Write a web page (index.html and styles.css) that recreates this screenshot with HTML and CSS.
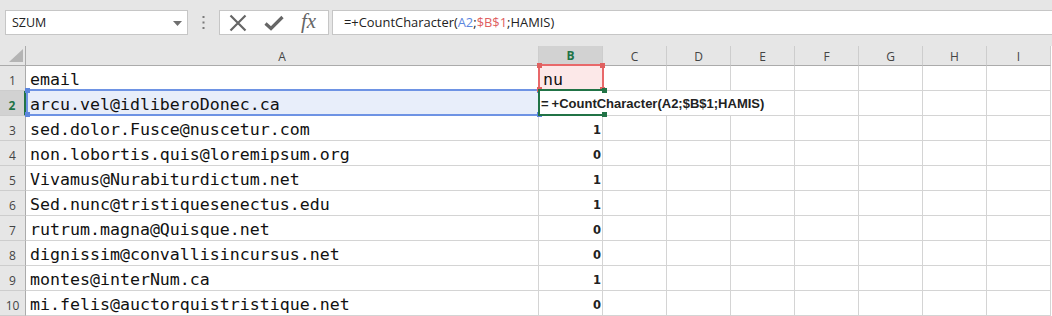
FILE: index.html
```html
<!DOCTYPE html>
<html>
<head>
<meta charset="utf-8">
<link rel="stylesheet" href="styles.css">
</head>
<body>
<div class="toolbar">
  <div class="namebox">
    <span class="namebox-text">SZUM</span>
    <svg class="namebox-arrow" width="9" height="5" viewBox="0 0 9 5"><path d="M0 0 H9 L4.5 5 Z" fill="#6f6f6f"/></svg>
  </div>
  <div class="dots">
    <svg width="3" height="14" viewBox="0 0 3 14"><rect x="0.5" y="0" width="2" height="2" fill="#7a7a7a"/><rect x="0.5" y="5.5" width="2" height="2" fill="#7a7a7a"/><rect x="0.5" y="11" width="2" height="2" fill="#7a7a7a"/></svg>
  </div>
  <div class="fbuttons">
    <svg class="ico-x" width="18" height="18" viewBox="0 0 18 18"><path d="M1.5 1.5 L16.5 16.5 M16.5 1.5 L1.5 16.5" stroke="#666" stroke-width="2.2" fill="none"/></svg>
    <svg class="ico-check" width="20" height="16" viewBox="0 0 20 16"><path d="M1.5 8.5 L7 13.5 L18.5 2" stroke="#666" stroke-width="3.2" fill="none"/></svg>
    <span class="fx">fx</span>
  </div>
  <div class="finput">=+CountCharacter(<span class="c-blue">A2</span>;<span class="c-red">$B$1</span>;HAMIS)</div>
</div>

<div class="sheet">
  <div class="hd corner"><svg width="14" height="13" viewBox="0 0 14 13"><path d="M14 0 V13 H0 Z" fill="#b4b4b4"/></svg></div>
  <div class="hd">A</div>
  <div class="hd hd-sel">B</div>
  <div class="hd">C</div>
  <div class="hd">D</div>
  <div class="hd">E</div>
  <div class="hd">F</div>
  <div class="hd">G</div>
  <div class="hd">H</div>
  <div class="hd">I</div>

  <div class="rh">1</div><div class="c txt">email</div><div class="c txt b1">nu</div><div class="c"></div><div class="c"></div><div class="c"></div><div class="c"></div><div class="c"></div><div class="c"></div><div class="c"></div>
  <div class="rh rh-sel">2</div><div class="c txt a2">arcu.vel@idliberoDonec.ca</div><div class="c"></div><div class="c"></div><div class="c"></div><div class="c"></div><div class="c"></div><div class="c"></div><div class="c"></div><div class="c"></div>
  <div class="rh">3</div><div class="c txt">sed.dolor.Fusce@nuscetur.com</div><div class="c num">1</div><div class="c"></div><div class="c"></div><div class="c"></div><div class="c"></div><div class="c"></div><div class="c"></div><div class="c"></div>
  <div class="rh">4</div><div class="c txt">non.lobortis.quis@loremipsum.org</div><div class="c num">0</div><div class="c"></div><div class="c"></div><div class="c"></div><div class="c"></div><div class="c"></div><div class="c"></div><div class="c"></div>
  <div class="rh">5</div><div class="c txt">Vivamus@Nurabiturdictum.net</div><div class="c num">1</div><div class="c"></div><div class="c"></div><div class="c"></div><div class="c"></div><div class="c"></div><div class="c"></div><div class="c"></div>
  <div class="rh">6</div><div class="c txt">Sed.nunc@tristiquesenectus.edu</div><div class="c num">1</div><div class="c"></div><div class="c"></div><div class="c"></div><div class="c"></div><div class="c"></div><div class="c"></div><div class="c"></div>
  <div class="rh">7</div><div class="c txt">rutrum.magna@Quisque.net</div><div class="c num">0</div><div class="c"></div><div class="c"></div><div class="c"></div><div class="c"></div><div class="c"></div><div class="c"></div><div class="c"></div>
  <div class="rh">8</div><div class="c txt">dignissim@convallisincursus.net</div><div class="c num">0</div><div class="c"></div><div class="c"></div><div class="c"></div><div class="c"></div><div class="c"></div><div class="c"></div><div class="c"></div>
  <div class="rh">9</div><div class="c txt">montes@interNum.ca</div><div class="c num">1</div><div class="c"></div><div class="c"></div><div class="c"></div><div class="c"></div><div class="c"></div><div class="c"></div><div class="c"></div>
  <div class="rh">10</div><div class="c txt">mi.felis@auctorquistristique.net</div><div class="c num">0</div><div class="c"></div><div class="c"></div><div class="c"></div><div class="c"></div><div class="c"></div><div class="c"></div><div class="c"></div>

  <div class="ref-blue"><i class="h h-tl"></i><i class="h h-tr"></i><i class="h h-bl"></i><i class="h h-br"></i></div>
  <div class="ref-red"><i class="h h-tl"></i><i class="h h-tr"></i><i class="h h-bl"></i><i class="h h-br"></i></div>
  <div class="editor"><span class="eq">=</span>+CountCharacter(A2;$B$1;HAMIS)</div>
  <div class="active"><i class="h h-tr"></i><i class="h h-br"></i></div>
</div>
</body>
</html>
```

FILE: styles.css
```css
* { box-sizing: border-box; }
html, body { margin: 0; padding: 0; }
body {
  width: 1052px;
  height: 316px;
  overflow: hidden;
  background: #e6e6e6;
  font-family: "Open Sans", "Liberation Sans", sans-serif;
}

.toolbar {
  height: 46px;
  padding-top: 10px;
  display: flex;
  align-items: flex-start;
}
.namebox {
  margin-left: 5px;
  width: 183px;
  height: 25px;
  background: #fff;
  border: 1px solid #c6c6c6;
  display: flex;
  align-items: center;
  justify-content: space-between;
  padding: 0 5px 0 6px;
}
.namebox-text { font-size: 12.5px; color: #222; }
.namebox-arrow { margin-top: 1px; }
.dots {
  width: 31px;
  height: 25px;
  display: flex;
  align-items: center;
  justify-content: center;
}
.fbuttons {
  width: 110px;
  height: 25px;
  background: #fff;
  border: 1px solid #c6c6c6;
  display: flex;
  align-items: center;
  padding-left: 9px;
}
.ico-x { margin-right: 17px; }
.ico-check { margin-right: 17px; }
.fx {
  font-family: "Liberation Serif", "DejaVu Serif", serif;
  font-style: italic;
  font-size: 21px;
  color: #666;
  line-height: 1;
  margin-top: -3px;
}
.finput {
  margin-left: 3px;
  flex: 1;
  height: 25px;
  background: #fff;
  border: 1px solid #c6c6c6;
  border-right: none;
  padding-left: 11px;
  font-size: 12.9px;
  line-height: 23px;
  color: #222;
}
.c-blue { color: #5c86de; }
.c-red { color: #e0605f; }

.sheet {
  position: relative;
  display: grid;
  grid-template-columns: 26px 513px repeat(8, 64px);
  grid-template-rows: 20px repeat(10, 25px);
  background: #fff;
}
.hd {
  background: #e6e6e6;
  border-right: 1px solid #cdcdcd;
  border-bottom: 1px solid #ababab;
  font-size: 12px;
  color: #444;
  display: flex;
  align-items: center;
  justify-content: center;
  padding-top: 1px;
}
.corner {
  border-right: 1px solid #ababab;
  align-items: flex-end;
  justify-content: flex-end;
  padding: 0 2px 3px 0;
}
.hd-sel {
  background: #d2d2d2;
  color: #217346;
  font-weight: bold;
  border-bottom: 2px solid #217346;
}
.rh {
  background: #e6e6e6;
  border-right: 1px solid #ababab;
  border-bottom: 1px solid #cdcdcd;
  font-size: 12px;
  color: #444;
  display: flex;
  align-items: center;
  justify-content: center;
  padding-top: 4px;
}
.rh-sel {
  background: #d2d2d2;
  color: #217346;
  font-weight: bold;
  border-right: 2px solid #217346;
}
.c {
  border-right: 1px solid #d4d4d4;
  border-bottom: 1px solid #d4d4d4;
  overflow: hidden;
  white-space: nowrap;
}
.txt {
  font-family: "DejaVu Sans Mono", "Liberation Mono", monospace;
  font-size: 16.6px;
  line-height: 20px;
  padding: 4px 0 0 4px;
  color: #111;
}
.num {
  font-family: "DejaVu Sans", "Liberation Sans", sans-serif;
  font-weight: bold;
  font-size: 11.5px;
  line-height: 20px;
  padding: 4px 1px 0 0;
  text-align: right;
  color: #222;
}
.b1 { background: #fce8e8; }
.a2 { background: #e8eefa; }

.ref-blue, .ref-red, .editor, .active { position: absolute; }
.h { position: absolute; width: 5px; height: 5px; }
.ref-blue {
  left: 26px; top: 43px; width: 513px; height: 27px;
  border-top: 2px solid #6e93e4;
  border-bottom: 2px solid #6e93e4;
  border-left: 2px solid #6e93e4;
}
.ref-blue .h { background: #5c86de; }
.ref-red {
  left: 538px; top: 18px; width: 66px; height: 27px;
  border: 2px solid #e8686a;
}
.ref-red .h { background: #e0605f; }
.h-tl { left: -3px; top: -3px; }
.h-tr { right: -3px; top: -3px; }
.h-bl { left: -3px; bottom: -3px; }
.h-br { right: -3px; bottom: -3px; }
.editor {
  left: 540px; top: 45px; width: 238px; height: 24px;
  background: #fff;
  font-family: "Liberation Sans", "Arial", sans-serif;
  font-weight: bold;
  font-size: 13px;
  line-height: 25px;
  color: #222;
  padding-left: 1px;
  white-space: nowrap;
}
.eq { margin-right: 3px; }
.active {
  left: 538px; top: 43px; width: 66px; height: 27px;
  border-top: 2px solid #217346;
  border-bottom: 2px solid #217346;
  border-left: 2px solid #217346;
}
.active .h { background: #217346; }
```
